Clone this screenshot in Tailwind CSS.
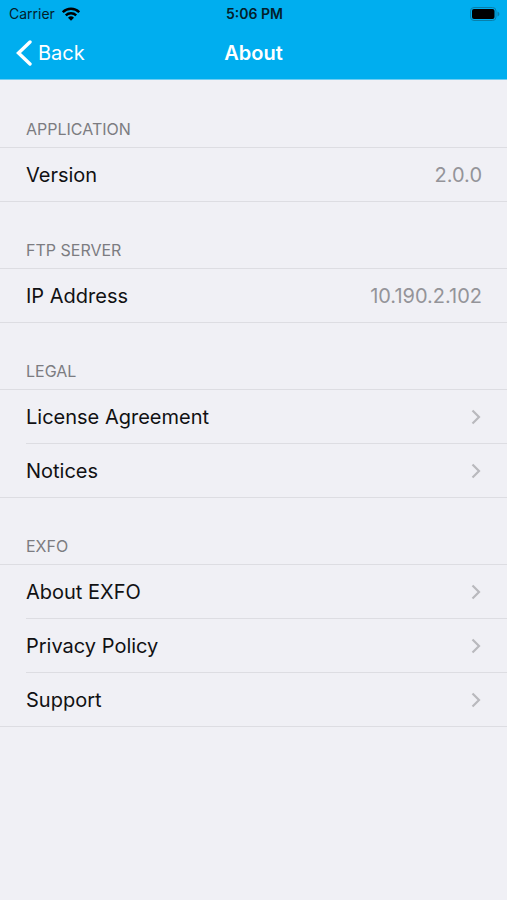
<!DOCTYPE html>
<html lang="en">
<head>
<meta charset="utf-8">
<meta name="viewport" content="width=device-width, initial-scale=1">
<title>About</title>
<script src="https://cdn.jsdelivr.net/npm/@tailwindcss/browser@4"></script>
</head>
<body class="min-h-screen bg-[#f0f0f5] font-['Inter','Liberation_Sans',sans-serif] text-xl text-[#111113]">
<svg class="hidden" aria-hidden="true">
  <symbol id="chevron" viewBox="0 0 10 16"><path d="M1.500 1.500 8 8l-6.500 6.500" fill="none" stroke="currentColor" stroke-width="2.200"/></symbol>
</svg>
<header class="border-b border-[#6fcdf2] bg-[#00aeef]">
  <div class="grid h-7 grid-cols-3 items-center pr-[7px] pl-[9px] text-sm text-[#03202b]">
    <div class="flex items-center gap-[7px]">
      <span>Carrier</span>
      <svg class="h-[14px] w-[18px] text-black" viewBox="0 0 18 14" fill="none" stroke="currentColor" stroke-width="2.400" aria-label="Wi-Fi" role="img">
        <path d="M.8 5.200a11.600 11.600 0 0 1 16.400 0M3.800 8.400a7.400 7.400 0 0 1 10.400 0"/>
        <path d="M9 13.800 6 10.800a4.300 4.300 0 0 1 6 0z" fill="currentColor" stroke="none"/>
      </svg>
    </div>
    <time class="text-center font-semibold">5:06 PM</time>
    <svg class="h-[14px] w-[30px] justify-self-end" viewBox="0 0 30 14" aria-label="Battery full" role="img">
      <rect x=".5" y=".5" width="25.500" height="13" rx="3.500" fill="none" stroke="#087fab"/>
      <rect x="2" y="2" width="22.500" height="10" rx="2" fill="#000"/>
      <path d="M27.500 4.500c2.500 1 2.500 4 0 5z" fill="#087fab"/>
    </svg>
  </div>
  <nav class="grid h-[51px] grid-cols-3 items-center px-4 pb-px text-white">
    <button type="button" class="flex items-center gap-[6px] justify-self-start">
      <svg class="h-[26px] w-4" viewBox="0 0 16 26" fill="none" stroke="currentColor" stroke-width="3.400" stroke-linecap="round" aria-hidden="true"><path d="M14 2 2.500 13 14 24"/></svg>
      <span>Back</span>
    </button>
    <h1 class="text-center font-semibold">About</h1>
  </nav>
</header>
<main class="pt-px">
  <section>
    <h2 class="flex h-[66px] items-end px-[26px] pb-[6px] text-base text-[#7c7c81]">APPLICATION</h2>
    <dl class="flex h-[55px] items-center justify-between border-y border-[#dddde2] pr-[25px] pl-[26px]">
      <dt>Version</dt><dd class="text-[#949499]">2.0.0</dd>
    </dl>
  </section>
  <section>
    <h2 class="flex h-[66px] items-end px-[26px] pb-[6px] text-base text-[#7c7c81]">FTP SERVER</h2>
    <dl class="flex h-[55px] items-center justify-between border-y border-[#dddde2] pr-[25px] pl-[26px]">
      <dt>IP Address</dt><dd class="text-[#949499]">10.190.2.102</dd>
    </dl>
  </section>
  <section>
    <h2 class="flex h-[66px] items-end px-[26px] pb-[6px] text-base text-[#7c7c81]">LEGAL</h2>
    <ul class="border-y border-[#dddde2] pl-[26px]">
      <li class="border-b border-[#dddde2]"><a href="#license" class="flex h-[53px] items-center justify-between pr-[26px]">License Agreement<svg class="h-4 w-[10px] text-[#b9b9be]" aria-hidden="true"><use href="#chevron"/></svg></a></li>
      <li><a href="#notices" class="flex h-[53px] items-center justify-between pr-[26px]">Notices<svg class="h-4 w-[10px] text-[#b9b9be]" aria-hidden="true"><use href="#chevron"/></svg></a></li>
    </ul>
  </section>
  <section>
    <h2 class="flex h-[66px] items-end px-[26px] pb-[6px] text-base text-[#7c7c81]">EXFO</h2>
    <ul class="border-y border-[#dddde2] pl-[26px]">
      <li class="border-b border-[#dddde2]"><a href="#about" class="flex h-[53px] items-center justify-between pr-[26px]">About EXFO<svg class="h-4 w-[10px] text-[#b9b9be]" aria-hidden="true"><use href="#chevron"/></svg></a></li>
      <li class="border-b border-[#dddde2]"><a href="#privacy" class="flex h-[53px] items-center justify-between pr-[26px]">Privacy Policy<svg class="h-4 w-[10px] text-[#b9b9be]" aria-hidden="true"><use href="#chevron"/></svg></a></li>
      <li><a href="#support" class="flex h-[53px] items-center justify-between pr-[26px]">Support<svg class="h-4 w-[10px] text-[#b9b9be]" aria-hidden="true"><use href="#chevron"/></svg></a></li>
    </ul>
  </section>
</main>
</body>
</html>
